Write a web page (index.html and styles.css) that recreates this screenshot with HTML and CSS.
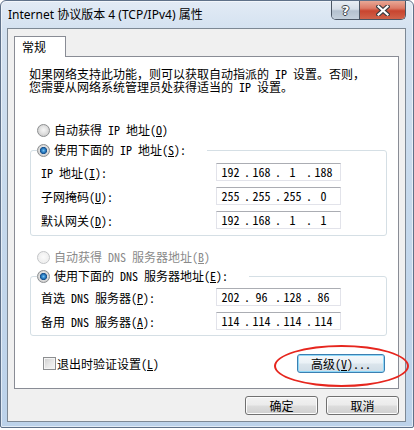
FILE: index.html
```html
<!DOCTYPE html>
<html>
	<head>
		<meta charset="utf-8" />
		<title>Internet 协议版本 4 (TCP/IPv4) 属性</title>
		<link rel="stylesheet" href="styles.css">
	</head>
	<body>
		<div class="window">
			<div class="titlebar">
				<span class="title">Internet 协议版本 4 (TCP/IPv4) 属性</span>
				<div class="capbtns">
					<span class="capbtn help">?</span>
					<span class="capbtn close">
						<svg width="14" height="11" viewBox="0 0 14 11">
							<path d="M2.5 1.5 L11.5 9.5 M11.5 1.5 L2.5 9.5" stroke="#3a3d42" stroke-width="4.4" stroke-linecap="square" fill="none" />
							<path d="M2.5 1.5 L11.5 9.5 M11.5 1.5 L2.5 9.5" stroke="#ffffff" stroke-width="2.2" stroke-linecap="square" fill="none" />
						</svg>
					</span>
				</div>
			</div>

			<div class="client">
				<div class="tabs">
					<span class="tab active">常规</span>
				</div>

				<div class="panel">
					<p class="intro">
						<span>如果网络支持此功能，则可以获取自动指派的 IP 设置。否则，</span>
						<span>您需要从网络系统管理员处获得适当的 IP 设置。</span>
					</p>

					<label class="option"><span class="radio"></span>自动获得 IP 地址(<u>O</u>)</label>
					<fieldset class="group">
						<legend class="option"><span class="radio checked"></span>使用下面的 IP 地址(<u>S</u>):</legend>
						<div class="field">
							<span class="label">IP 地址(<u>I</u>):</span>
							<span class="ipbox"><span class="oct">192</span><span class="dot">.</span><span class="oct">168</span><span class="dot">.</span><span class="oct">1</span><span class="dot">.</span><span class="oct">188</span></span>
						</div>
						<div class="field">
							<span class="label">子网掩码(<u>U</u>):</span>
							<span class="ipbox"><span class="oct">255</span><span class="dot">.</span><span class="oct">255</span><span class="dot">.</span><span class="oct">255</span><span class="dot">.</span><span class="oct">0</span></span>
						</div>
						<div class="field">
							<span class="label">默认网关(<u>D</u>):</span>
							<span class="ipbox"><span class="oct">192</span><span class="dot">.</span><span class="oct">168</span><span class="dot">.</span><span class="oct">1</span><span class="dot">.</span><span class="oct">1</span></span>
						</div>
					</fieldset>

					<label class="option option-dns disabled"><span class="radio"></span>自动获得 DNS 服务器地址(<u>B</u>)</label>
					<fieldset class="group group-dns">
						<legend class="option"><span class="radio checked"></span>使用下面的 DNS 服务器地址(<u>E</u>):</legend>
						<div class="field">
							<span class="label">首选 DNS 服务器(<u>P</u>):</span>
							<span class="ipbox"><span class="oct">202</span><span class="dot">.</span><span class="oct">96</span><span class="dot">.</span><span class="oct">128</span><span class="dot">.</span><span class="oct">86</span></span>
						</div>
						<div class="field">
							<span class="label">备用 DNS 服务器(<u>A</u>):</span>
							<span class="ipbox"><span class="oct">114</span><span class="dot">.</span><span class="oct">114</span><span class="dot">.</span><span class="oct">114</span><span class="dot">.</span><span class="oct">114</span></span>
						</div>
					</fieldset>

					<div class="panel-foot">
						<label class="check"><span class="checkbox"></span>退出时验证设置(<u>L</u>)</label>
						<button class="btn btn-default">高级(<u>V</u>)...</button>
					</div>
				</div>

				<div class="actions">
					<button class="btn">确定</button>
					<button class="btn">取消</button>
				</div>
			</div>

			<!-- red marker drawn over the screenshot -->
			<div class="marker"></div>
		</div>
	</body>
</html>
```

FILE: styles.css
```css
html {
	background: #ffffff;
}
body {
	margin: 0;
	font-family: "Noto Sans Mono CJK SC", "Noto Sans CJK SC", monospace;
	font-size: 12px;
	color: #000000;
}

.window {
	position: relative;
	box-sizing: border-box;
	width: 414px;
	height: 428px;
	padding: 0 7px 5px 6px;
	border: 1px solid #5f7189;
	border-radius: 6px 6px 2px 2px;
	background: linear-gradient(180deg, #e2ebf5 0, #d3e1f0 30px, #c6d9ec 200px, #bcd2ea 100%);
	box-shadow: inset 0 0 0 1px rgba(255, 255, 255, 0.55);
}

/* title bar */
.titlebar {
	display: flex;
	height: 27px;
}
.title {
	align-self: center;
	margin-left: 1px;
	font-family: "Noto Sans", "Noto Sans CJK SC", sans-serif;
	font-size: 12px;
	line-height: 16px;
	color: #000000;
}
.capbtns {
	display: flex;
	margin-left: auto;
	height: 19px;
	border: 1px solid #4b5664;
	border-top: none;
	border-radius: 0 0 5px 5px;
	overflow: hidden;
	box-sizing: border-box;
}
.capbtn {
	display: flex;
	align-items: center;
	justify-content: center;
	height: 18px;
}
.help {
	width: 27px;
	border-right: 1px solid #4b5664;
	background: linear-gradient(180deg, #e9eef4 0, #d6dee8 45%, #b4c1cf 55%, #c4d0dc 100%);
	font-family: "DejaVu Sans", sans-serif;
	font-weight: bold;
	font-size: 13px;
	color: #ffffff;
	text-shadow: 1px 0 0 #3a4048, -1px 0 0 #3a4048, 0 1px 0 #3a4048, 0 -1px 0 #3a4048;
}
.close {
	width: 45px;
	background: linear-gradient(180deg, #e8a896 0, #dc7a66 40%, #c8452f 55%, #d0624a 100%);
}

/* client area */
.client {
	box-sizing: border-box;
	height: 394px;
	padding: 7px 6px 0 6px;
	border: 1px solid #7d8894;
	background: #f0f0f0;
}

.tabs {
	display: flex;
}
.tab {
	position: relative;
	z-index: 1;
	box-sizing: border-box;
	width: 52px;
	height: 21px;
	margin-bottom: -1px;
	padding-left: 7px;
	border: 1px solid #898c95;
	border-bottom: none;
	background: #ffffff;
	line-height: 19px;
}

.panel {
	display: flex;
	flex-direction: column;
	box-sizing: border-box;
	width: 385px;
	height: 333px;
	border: 1px solid #898c95;
	background: #ffffff;
}

.intro {
	display: flex;
	flex-direction: column;
	margin: 11px 0 0 14px;
	line-height: 12px;
}
.intro span {
	height: 12px;
	white-space: nowrap;
}
.intro span + span {
	margin-top: 1px;
}

.option {
	display: flex;
	align-items: center;
	height: 16px;
	line-height: 16px;
	white-space: nowrap;
}
.panel > .option {
	margin: 29px 0 0 22px;
}
.panel > .option-dns {
	margin-top: 13px;
}
.disabled {
	color: #8a8a8a;
}

.radio {
	flex: none;
	box-sizing: border-box;
	width: 13px;
	height: 13px;
	margin-right: 4px;
	border: 1px solid #8c8e90;
	border-radius: 50%;
	background: radial-gradient(circle at 50% 45%, #f6f6f6 0, #e4e4e4 40%, #cfcfcf 75%, #f2f2f2 100%);
}
.radio.checked {
	background:
		radial-gradient(circle at 50% 50%, #7cc3f0 0, #2c83c9 1.8px, #1a4f88 3.3px, rgba(26, 79, 136, 0) 3.9px),
		radial-gradient(circle at 50% 45%, #f6f6f6 0, #e4e4e4 40%, #cfcfcf 75%, #f2f2f2 100%);
}
.disabled .radio {
	border-color: #c3c5c7;
	background: radial-gradient(circle at 50% 45%, #fbfbfb 0, #f0f0f0 60%, #f7f7f7 100%);
}

.group {
	min-width: 0;
	margin: 4px 11px 0 15px;
	padding: 2px 0 3px 6px;
	border: 1px solid #d5dfe5;
	border-radius: 3px;
}
.group-dns {
	margin-top: 3px;
	padding: 1px 0 2px 6px;
}
.group legend {
	padding: 0 21px 0 0;
}

.field {
	display: flex;
	align-items: center;
	height: 24px;
	margin-left: 4px;
}
.label {
	width: 175px;
	white-space: nowrap;
}
.ipbox {
	display: flex;
	box-sizing: border-box;
	width: 125px;
	height: 18px;
	border: 1px solid #e2e3ea;
	border-top-color: #abadb3;
	background: #ffffff;
	line-height: 16px;
}
.oct {
	width: 27px;
	text-align: center;
}
.dot {
	width: 4px;
	text-align: center;
}

.panel-foot {
	display: flex;
	align-items: center;
	margin: 18px 13px 0 28px;
}
.check {
	display: flex;
	align-items: center;
	line-height: 16px;
}
.checkbox {
	box-sizing: border-box;
	width: 13px;
	height: 13px;
	margin-right: 1px;
	border: 1px solid #8c8e90;
	background: linear-gradient(135deg, #cdcdcd 0, #e6e6e6 50%, #f7f7f7 100%);
	box-shadow: inset 0 0 0 1px #f4f4f4;
}

.btn {
	box-sizing: border-box;
	height: 19px;
	padding: 0;
	border: 1px solid #707070;
	border-radius: 3px;
	background: linear-gradient(180deg, #f2f2f2 0, #ebebeb 48%, #dddddd 52%, #cfcfcf 100%);
	box-shadow: inset 0 0 0 1px #fcfcfc;
	font-family: inherit;
	font-size: 12px;
	line-height: 16px;
	color: #000000;
}
.btn-default {
	width: 88px;
	margin-left: auto;
	border-color: #3c7fb1;
	box-shadow: inset 0 0 0 1px #8fd8f8;
	background: linear-gradient(180deg, #f4f8fb 0, #eaf1f6 48%, #dbe5ec 52%, #cfdce6 100%);
}

.actions {
	display: flex;
	justify-content: flex-end;
	gap: 8px;
	margin-top: 7px;
}
.actions .btn {
	width: 73px;
}

.marker {
	position: absolute;
	left: 273px;
	top: 344px;
	box-sizing: border-box;
	width: 135px;
	height: 42px;
	border: 2px solid #e6261e;
	border-radius: 50%;
}
```
